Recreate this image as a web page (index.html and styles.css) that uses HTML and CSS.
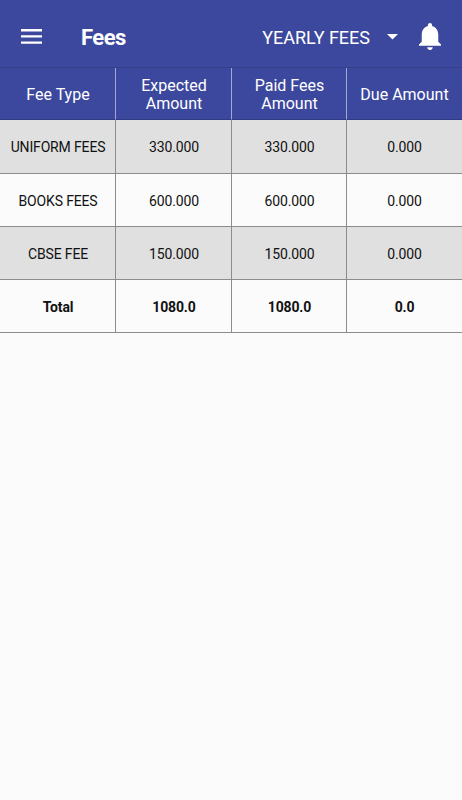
FILE: index.html
```html
<!DOCTYPE html>
<html lang="en">
<head>
    <meta charset="UTF-8">
    <meta name="viewport" content="width=device-width, initial-scale=1.0">
    <title>Fees</title>
    <link rel="stylesheet" href="styles.css">
</head>
<body>

    <header class="toolbar">
        <svg class="menu-icon" width="21" height="15" viewBox="0 0 21 15">
            <path d="M0 0h21v2.4H0zM0 6.2h21v2.4H0zM0 12.4h21v2.4H0z" fill="#fff"/>
        </svg>
        <h1>Fees</h1>
        <div class="fee-select">
            <span>YEARLY FEES</span>
            <svg width="11" height="6" viewBox="0 0 11 6"><path d="M0 0h11L5.5 5.6z" fill="#fff"/></svg>
        </div>
        <svg class="bell-icon" width="22" height="27" viewBox="4 2.5 16 19.5" preserveAspectRatio="none">
            <path d="M12 22c1.1 0 2-.9 2-2h-4c0 1.1.89 2 2 2zm6-6v-5c0-3.07-1.64-5.64-4.5-6.32V4c0-.83-.67-1.5-1.5-1.5s-1.5.67-1.5 1.5v.68C7.63 5.36 6 7.92 6 11v5l-2 2v1h16v-1l-2-2z" fill="#fff"/>
        </svg>
    </header>

    <table class="fees">
        <colgroup>
            <col class="wide">
            <col class="wide">
            <col>
            <col>
        </colgroup>
        <tr>
            <th>Fee Type</th>
            <th>Expected Amount</th>
            <th>Paid Fees Amount</th>
            <th>Due Amount</th>
        </tr>
        <tr class="odd">
            <td>UNIFORM FEES</td>
            <td>330.000</td>
            <td>330.000</td>
            <td>0.000</td>
        </tr>
        <tr>
            <td>BOOKS FEES</td>
            <td>600.000</td>
            <td>600.000</td>
            <td>0.000</td>
        </tr>
        <tr class="odd">
            <td>CBSE FEE</td>
            <td>150.000</td>
            <td>150.000</td>
            <td>0.000</td>
        </tr>
        <tr class="total">
            <td>Total</td>
            <td>1080.0</td>
            <td>1080.0</td>
            <td>0.0</td>
        </tr>
    </table>

</body>
</html>
```
FILE: styles.css
```css
body {
    margin: 0;
    font-family: Roboto, sans-serif;
    background-color: #fbfbfb;
    color: #111;
}

.toolbar {
    display: flex;
    align-items: center;
    box-sizing: border-box;
    height: 68px;
    padding: 5px 21px 0 21px;
    background-color: #3c489e;
    border-bottom: 1px solid #343f8b;
    color: #fff;
}

.toolbar h1 {
    margin: 2px 0 0 39px;
    font-size: 22px;
    font-weight: 700;
    letter-spacing: -0.5px;
}

.fee-select {
    display: flex;
    align-items: center;
    gap: 17px;
    margin: 2px 0 0 auto;
    font-size: 18px;
}

.bell-icon {
    margin-left: 21px;
}

.fees {
    width: 462px;
    table-layout: fixed;
    border-collapse: separate;
    border-spacing: 0;
}

.fees .wide {
    width: 116px;
}

.fees th,
.fees td {
    box-sizing: border-box;
    height: 53px;
    padding: 1px 0 0 1px;
    border-right: 1px solid #8c8c8c;
    border-bottom: 1px solid #8c8c8c;
    text-align: center;
    vertical-align: middle;
    font-size: 14px;
    letter-spacing: -0.15px;
}

.fees th {
    height: 52px;
    padding: 2px 15px 0 16px;
    background-color: #3c489e;
    border-right-color: #a3a8cf;
    border-bottom-color: #303a86;
    color: #fff;
    font-size: 16px;
    font-weight: 400;
    line-height: 18px;
    letter-spacing: 0;
}

.fees th:last-child,
.fees td:last-child {
    padding-left: 0;
    padding-right: 0;
    border-right: none;
}

.fees .odd {
    background-color: #e0e0e0;
}

/* first row takes the pixel the header row gives up */
.fees tr:nth-child(2) td {
    height: 54px;
}

.fees .total td {
    font-weight: 700;
}
```
